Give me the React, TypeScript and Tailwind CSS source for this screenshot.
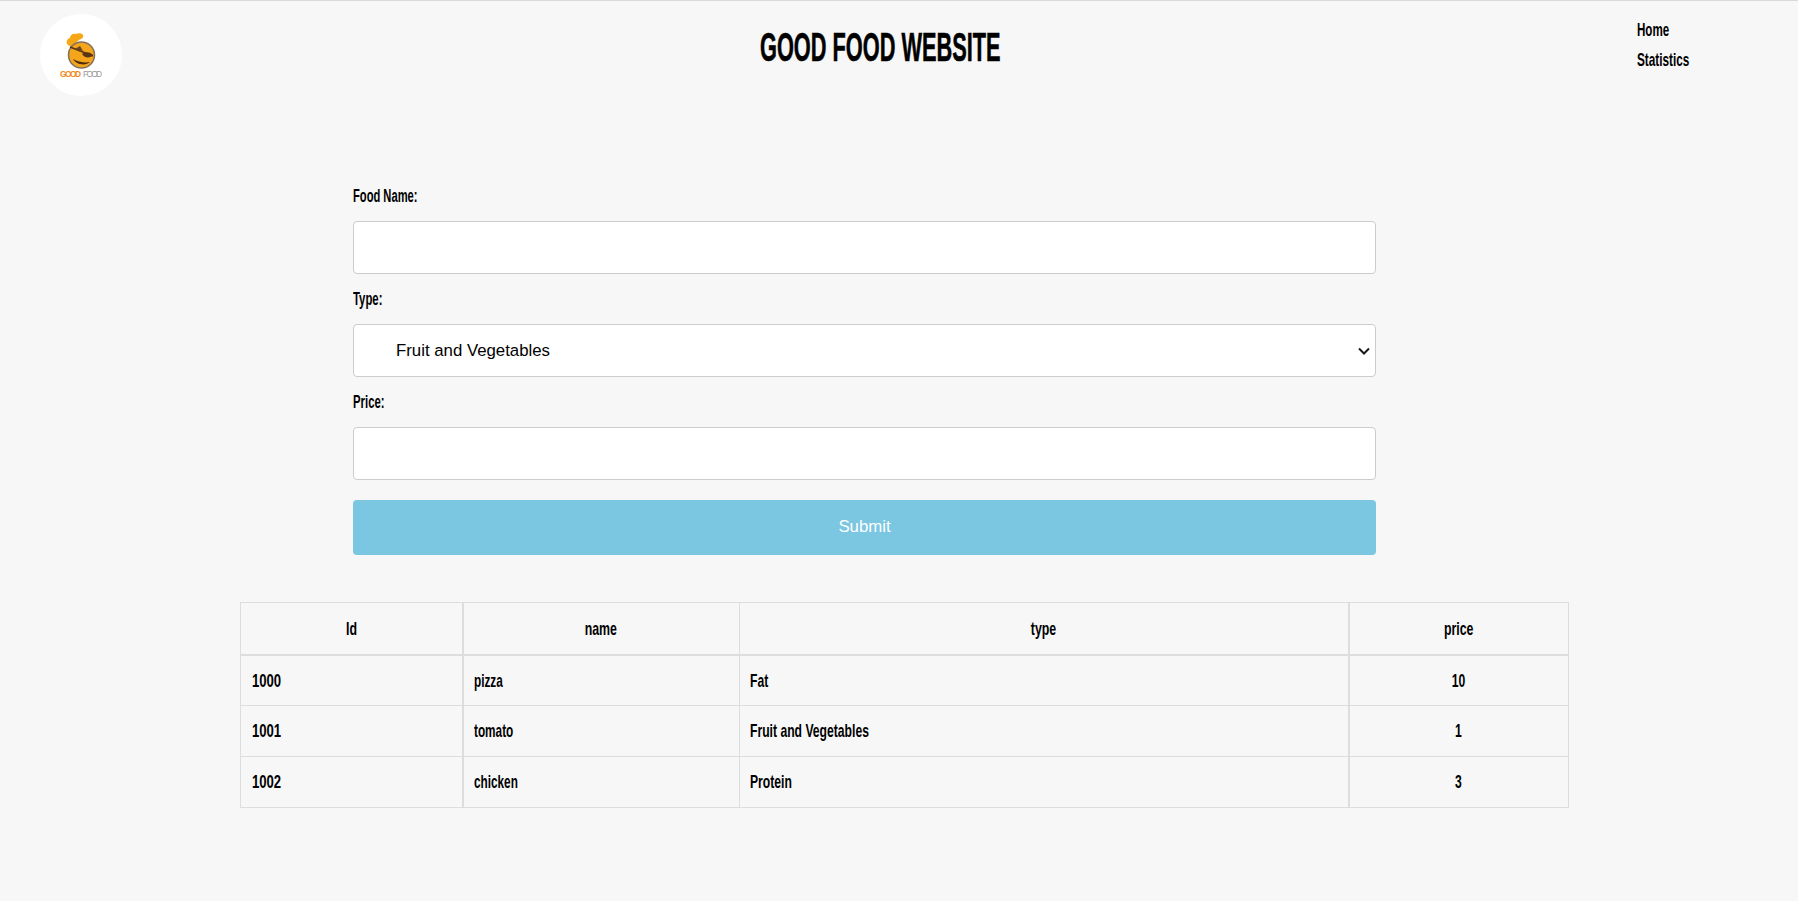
function Squeezed({ k, children, center }: { k: string; children: React.ReactNode; center?: boolean }) {
  return <span className={`inline-block whitespace-nowrap ${center ? "origin-center" : "origin-left"} ${k}`}>{children}</span>;
}

export default function App() {
  const rows = [
    ["1000", "pizza", "Fat", "10"],
    ["1001", "tomato", "Fruit and Vegetables", "1"],
    ["1002", "chicken", "Protein", "3"],
  ];
  const input = "block w-full h-[53px] bg-white border border-[#cccccc] rounded-[4px]";
  const label = "block h-[50px] pt-[13px] text-[18px] leading-[24px] font-bold text-black";
  const cell = "border border-[#dddddd] px-[10px] pt-[1px]";
  return (
    <div className="min-h-[901px] bg-[#f7f7f7] border-t border-[#d9d9d9] font-['Liberation_Sans',sans-serif]">
      <header className="flex h-[119px] items-start">
        <div className="ml-[40px] mt-[13px] h-[82px] w-[82px] rounded-full bg-white">
          <svg width="82" height="82" viewBox="0 0 82 82">
            <path d="M28 31c-2-2-2-6 2-7 0-3 3-5 6-4 2-1 6-1 7 1 1 3-2 4-4 5l-7 6c-1 1-3 0-4-1z" fill="#f5a716" />
            <circle cx="41.5" cy="41" r="13" fill="#f4a51c" stroke="#85705a" strokeWidth="1.5" />
            <path d="M30 33l23 9" stroke="#5a3514" strokeWidth="1.6" fill="none" />
            <path d="M35 35l5-3 3 5z" fill="#6b4420" />
            <path d="M42 40c3-3 9-2 11 1-2 3-8 4-11-1z" fill="#5a3514" />
            <path d="M33 45c3 6 13 7 17 3-5 1-12 0-17-3z" fill="#4a2c12" />
            <text x="20" y="63" fontSize="8.4" fontWeight="700" fill="#f08a24" fontFamily="Liberation Sans, sans-serif" textLength="21">GOOD</text>
            <text x="43" y="63" fontSize="8.4" fill="#9a9a9a" fontFamily="Liberation Sans, sans-serif" textLength="19">FOOD</text>
          </svg>
        </div>
        <h1 className="ml-[638px] mt-[21px] w-[240px] text-[40px] leading-[50px] font-bold text-black [-webkit-text-stroke:0.6px_black]">
          <Squeezed k="scale-x-[0.544]">GOOD FOOD WEBSITE</Squeezed>
        </h1>
        <nav className="ml-[637px] mt-[14px] flex flex-col text-[19px] leading-[30px] text-black font-bold">
          <a><Squeezed k="scale-x-[0.61]">Home</Squeezed></a>
          <a><Squeezed k="scale-x-[0.62]">Statistics</Squeezed></a>
        </nav>
      </header>
      <form className="ml-[353px] w-[1023px] pt-[50px]">
        <label className={`${label} !h-[51px] !pt-[14px]`}><Squeezed k="scale-x-[0.62]">Food Name:</Squeezed></label>
        <input className={input} />
        <label className={label}><Squeezed k="scale-x-[0.63]">Type:</Squeezed></label>
        <div className="relative">
          <select className={`${input} appearance-none pl-[42px] pr-[4px] text-[16.8px] text-black`}>
            <option>Fruit and Vegetables</option>
          </select>
          <svg className="pointer-events-none absolute right-[6px] top-[23px]" width="12" height="8" viewBox="0 0 12 8">
            <path d="M1 1.5l5 5 5-5" fill="none" stroke="#1a1a1a" strokeWidth="2" />
          </svg>
        </div>
        <label className={label}><Squeezed k="scale-x-[0.63]">Price:</Squeezed></label>
        <input className={input} />
        <button type="button" className="mt-[20px] block h-[55px] w-full rounded-[4px] bg-[#7bc6e1] pb-[2px] text-[16.8px] text-white">Submit</button>
      </form>
      <table className="ml-[240px] mt-[47px] w-[1328px] table-fixed border-collapse text-[19px] font-bold text-black">
        <colgroup>
          <col className="w-[222px]" />
          <col className="w-[277px]" />
          <col className="w-[609px]" />
          <col className="w-[220px]" />
        </colgroup>
        <thead>
          <tr className="h-[52px]">
            {["Id", "name", "type", "price"].map((h, i) => (
              <th key={h} className={`${cell} border-b-2 ${i === 0 || i === 2 ? "border-r-2" : ""} text-center font-bold`}>
                <Squeezed center k="scale-x-[0.65]">{h}</Squeezed>
              </th>
            ))}
          </tr>
        </thead>
        <tbody>
          {rows.map((r) => (
            <tr key={r[0]} className="h-[51px]">
              <td className={`${cell} border-r-2 !px-[11px]`}><Squeezed k="scale-x-[0.69]">{r[0]}</Squeezed></td>
              <td className={cell}><Squeezed k="scale-x-[0.62]">{r[1]}</Squeezed></td>
              <td className={`${cell} border-r-2`}><Squeezed k="scale-x-[0.64]">{r[2]}</Squeezed></td>
              <td className={`${cell} text-center`}><Squeezed center k="scale-x-[0.64]">{r[3]}</Squeezed></td>
            </tr>
          ))}
        </tbody>
      </table>
    </div>
  );
}
